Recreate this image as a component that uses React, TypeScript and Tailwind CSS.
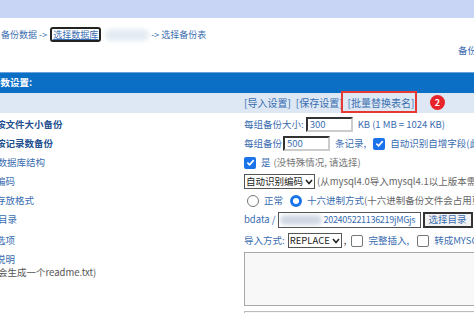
import React from "react";

const font = { fontFamily: '"Noto Sans CJK SC", "Liberation Sans", sans-serif' };

function Row({ label, bold, shift, children }: { label: string; bold?: boolean; shift?: string; children: React.ReactNode }) {
  return (
    <div className="flex items-center h-[19px]">
      <div className="w-[244px] shrink-0 overflow-hidden">
        <div className={`text-[9.5px] whitespace-nowrap ${shift ?? ""} ${bold ? "font-bold text-[#24508f]" : "text-[#3a6db0]"}`}>{label}</div>
      </div>
      <div className="flex items-center whitespace-nowrap">{children}</div>
    </div>
  );
}

function Check({ on }: { on?: boolean }) {
  return on ? (
    <span className="inline-flex w-[12px] h-[12px] rounded-[2px] bg-[#1a73e8] items-center justify-center mr-[5px]">
      <svg width="9" height="9" viewBox="0 0 10 10"><path d="M1.5 5.2 L4 7.6 L8.6 2.4" stroke="white" strokeWidth="1.8" fill="none" /></svg>
    </span>
  ) : (
    <span className="inline-block w-[12px] h-[12px] rounded-[2px] border border-[#767676] bg-white mr-[5px]" />
  );
}

export default function App() {
  return (
    <div style={font} className="w-[474px] h-[313px] overflow-hidden bg-white text-[9.5px] leading-none">
      <div className="h-[18px] bg-[#c9d5f5]" />
      <div className="h-[54px] relative">
        <div className="flex items-center pt-[9px] pl-[1px] text-[9px] text-[#3a6db0] whitespace-nowrap">
          <span>备份数据 -&gt;</span>
          <span className="ml-[3px] px-[1px] py-[1px] border-2 border-[#222] rounded-[3px] underline">选择数据库</span>
          <span className="ml-[4px] w-[44px] h-[12px] rounded-full bg-[#e4ecf3] blur-[2px]" />
          <span className="ml-[2px]">-&gt; 选择备份表</span>
        </div>
        <span className="absolute left-[458px] top-[28px] text-[#3a6db0] whitespace-nowrap">备份</span>
      </div>
      <div className="h-[21px] border-t border-[#6aa3dc] bg-[#0b6fc6] flex items-center text-white font-bold whitespace-nowrap">
        <span className="-ml-[9px]">参数设置:</span>
      </div>
      <div className="h-[20px] bg-[#dde8f4] flex items-center pl-[244px] text-[10px] text-[#3a6db0] whitespace-nowrap relative">
        <span>[导入设置]</span>
        <span className="ml-[5px]">[保存设置]</span>
        <span className="ml-[5px]">[批量替换表名]</span>
        <span className="absolute left-[341px] -top-[2px] w-[76px] h-[22px] border-2 border-[#e53935]" />
        <span className="absolute left-[430px] top-[2px] w-[15px] h-[15px] rounded-full bg-[#e8242a] text-white text-[9px] font-bold flex items-center justify-center">2</span>
      </div>
      <div className="pt-[2px] text-[#3a6db0]">
        <Row label="按文件大小备份" bold shift="-ml-[4px]">
          <span>每组备份大小:</span>
          <span className="ml-[2px] w-[47px] h-[15px] border-2 border-[#333] border-r-[#ccc] border-b-[#ccc] flex items-center pl-[2px] text-[#3a6db0]">300</span>
          <span className="ml-[5px]">KB (1 MB = 1024 KB)</span>
        </Row>
        <Row label="按记录数备份" bold shift="-ml-[4px]">
          <span>每组备份</span>
          <span className="ml-[1px] w-[47px] h-[15px] border-2 border-[#333] border-r-[#ccc] border-b-[#ccc] flex items-center pl-[2px]">500</span>
          <span className="ml-[5px] mr-[7px]">条记录,</span>
          <Check on />
          <span>自动识别自增字段(此方法</span>
        </Row>
        <Row label="备数据库结构" shift="-ml-[12px]">
          <Check on />
          <span>是</span>
          <span className="ml-[3px] text-[#777]">(没特殊情况, 请选择)</span>
        </Row>
        <Row label="编码" shift="-ml-[4px]">
          <span className="h-[15px] border border-[#555] bg-white flex items-center px-[1px] text-[#222]">
            自动识别编码
            <svg className="ml-[2px]" width="8" height="6" viewBox="0 0 8 6"><path d="M1 1 L4 4.5 L7 1" stroke="#222" strokeWidth="1.6" fill="none" /></svg>
          </span>
          <span className="ml-[2px] text-[#666]">(从mysql4.0导入mysql4.1以上版本需要选</span>
        </Row>
        <Row label="存放格式" shift="-ml-[4px]">
          <span className="ml-[3px] w-[12px] h-[12px] rounded-full border border-[#767676] mr-[5px]" />
          <span>正常</span>
          <span className="ml-[7px] w-[12px] h-[12px] rounded-full border-[3px] border-[#1a73e8] mr-[5px]" />
          <span>十六进制方式</span>
          <span className="text-[#666]">(十六进制备份文件会占用更多的</span>
        </Row>
        <Row label="目录" shift="-ml-[2px]">
          <span>bdata /</span>
          <span className="ml-[2px] h-[16px] border border-[#555] flex items-center relative w-[143px] overflow-hidden">
            <span className="absolute left-[1px] top-[2px] w-[42px] h-[10px] rounded-full bg-[#d0d8e4] blur-[2px]" />
            <span className="ml-[45px] text-[9px] tracking-[-0.3px]">202405221136219jMGjs</span>
          </span>
          <span className="ml-[2px] h-[16px] border-2 border-[#333] px-[4px] flex items-center bg-[#f3f3f3]">选择目录</span>
          <span className="ml-[3px]">(</span>
        </Row>
        <div className="h-[2px]" />
        <Row label="选项" shift="-ml-[4px]">
          <span>导入方式:</span>
          <span className="ml-[3px] h-[15px] border border-[#555] bg-white flex items-center px-[1px] text-[#222]">
            REPLACE
            <svg className="ml-[2px]" width="8" height="6" viewBox="0 0 8 6"><path d="M1 1 L4 4.5 L7 1" stroke="#222" strokeWidth="1.6" fill="none" /></svg>
          </span>
          <span className="ml-[2px] mr-[5px] text-[#444]">,</span>
          <Check />
          <span>完整插入,</span>
          <span className="ml-[8px]" />
          <Check />
          <span>转成MYSQL4</span>
        </Row>
        <div className="flex">
          <div className="w-[244px] shrink-0 overflow-hidden pt-[3px] leading-[13px] text-[9.5px]">
            <div className="-ml-[4px] text-[#3a6db0]">说明</div>
            <div className="-ml-[2px] text-[#555] whitespace-nowrap">会生成一个readme.txt)</div>
          </div>
          <div className="flex flex-col">
            <div className="mt-[2px] w-[240px] h-[54px] border border-[#a8a8a8] bg-[#f8f8f8]" />
            <div className="mt-[5px] w-[240px] h-[10px] border border-[#bbb] bg-[#f8f8f8]" />
          </div>
        </div>
      </div>
    </div>
  );
}
